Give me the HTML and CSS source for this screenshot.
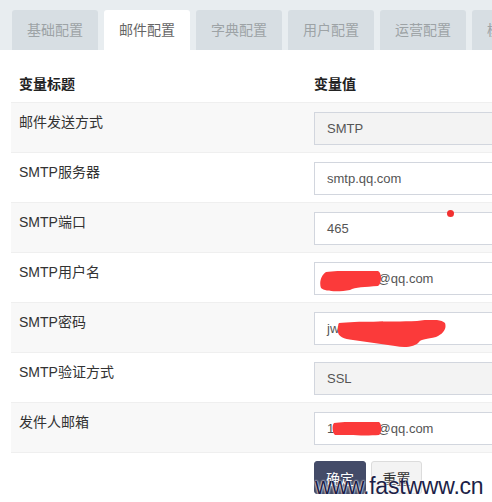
FILE: index.html
```html
<!DOCTYPE html>
<html lang="zh-CN">
<head>
<meta charset="utf-8">
<title>邮件配置</title>
<link rel="stylesheet" href="styles.css">
</head>
<body>
<div class="page">
  <nav class="tabs">
    <div class="tab">基础配置</div>
    <div class="tab active">邮件配置</div>
    <div class="tab">字典配置</div>
    <div class="tab">用户配置</div>
    <div class="tab">运营配置</div>
    <div class="tab">模板配置</div>
  </nav>
  <div class="content">
    <div class="table">
      <div class="row head">
        <div class="label">变量标题</div>
        <div class="value">变量值</div>
      </div>
      <div class="row odd">
        <div class="label">邮件发送方式</div>
        <div class="value"><div class="field disabled">SMTP</div></div>
      </div>
      <div class="row">
        <div class="label">SMTP服务器</div>
        <div class="value"><div class="field">smtp.qq.com</div></div>
      </div>
      <div class="row odd">
        <div class="label">SMTP端口</div>
        <div class="value"><div class="field">465<span class="dot"></span></div></div>
      </div>
      <div class="row">
        <div class="label">SMTP用户名</div>
        <div class="value"><div class="field">1234567@qq.com
          <svg class="redact r1" width="62" height="21" viewBox="0 0 62 21"><path d="M6 1 C20 -1 40 0 58 0 C62 2 62 12 58 15 C45 16 35 16 30 19 C20 21 5 21 1 17 C-1 12 1 4 6 1 Z" fill="#fb3a3a"/></svg>
        </div></div>
      </div>
      <div class="row odd">
        <div class="label">SMTP密码</div>
        <div class="value"><div class="field">jwxxxxxxxxxxxxxx
          <svg class="redact r2" width="110" height="28" viewBox="0 0 110 28"><path d="M2 3 C20 1 50 2 80 1 C92 -1 104 -1 108 3 C110 9 106 14 99 17 C90 19 84 19 82 22 C78 27 68 28 58 26 C44 24 30 22 16 20 C6 19 0 16 1 10 C1 7 1 4 2 3 Z" fill="#fb3a3a"/></svg>
        </div></div>
      </div>
      <div class="row">
        <div class="label">SMTP验证方式</div>
        <div class="value"><div class="field disabled">SSL</div></div>
      </div>
      <div class="row odd">
        <div class="label">发件人邮箱</div>
        <div class="value"><div class="field">1234567@qq.com
          <svg class="redact r3" width="50" height="14" viewBox="0 0 50 14"><path d="M2 1 C15 -1 35 0 47 0 C50 2 50 11 47 13 C35 14 15 13 3 13 C0 11 0 3 2 1 Z" fill="#fb3a3a"/></svg>
        </div></div>
      </div>
      <div class="row actions">
        <div class="label"></div>
        <div class="value">
          <button class="btn primary">确定</button>
          <button class="btn">重置</button>
        </div>
      </div>
    </div>
  </div>
  <div class="watermark">www.fastwww.cn</div>
</div>
</body>
</html>
```
FILE: styles.css
```css
* { box-sizing: border-box; }
html, body { margin: 0; padding: 0; background: #fff; }
body {
  font-family: "Liberation Sans", "Noto Sans CJK SC", sans-serif;
  font-size: 14px;
  color: #333;
  overflow: hidden;
}
.page { position: relative; width: 492px; height: 502px; overflow: hidden; }
.tabs {
  display: flex;
  gap: 6px;
  height: 50px;
  padding: 10px 0 0 12px;
  background: #e8edf0;
  overflow: hidden;
  white-space: nowrap;
}
.tab {
  flex: 0 0 86px;
  height: 40px;
  line-height: 40px;
  text-align: center;
  background: #d7dee3;
  color: #9da3a6;
  border-radius: 3px 3px 0 0;
}
.tab.active { background: #fff; color: #666; }
.content { padding: 16px 0 0 11px; }
.table { width: 640px; }
.row {
  display: grid;
  grid-template-columns: 295px 1fr;
  height: 50px;
  border-top: 1px solid #efefef;
  padding-top: 9px;
}
.row.odd { background: #f8f8f8; }
.row.head {
  height: 36px;
  border-top: none;
  padding-top: 0;
  line-height: 36px;
  font-weight: bold;
  color: #222;
}
.label { padding-left: 8px; padding-top: 0; line-height: 20px; }
.row.head .label { line-height: 36px; }
.value { padding-left: 8px; }
.row.head .value { line-height: 36px; }
.field {
  position: relative;
  height: 33px;
  line-height: 31px;
  border: 1px solid #d2d6de;
  background: #fff;
  padding-left: 12px;
  font-size: 13px;
  color: #555;
}
.field.disabled { background: #f3f3f3; }
.redact { position: absolute; }
.r1 { left: 5px; top: 8px; }
.r2 { left: 22px; top: 7px; }
.r3 { left: 17px; top: 9px; }
.dot {
  position: absolute;
  left: 132px;
  top: -3px;
  width: 7px;
  height: 7px;
  border-radius: 50%;
  background: #f23030;
}
.row.actions { border-top: 1px solid #efefef; padding-top: 8px; }
.btn {
  height: 33px;
  padding: 0 10px;
  font-family: inherit;
  font-size: 14px;
  border-radius: 3px;
  border: 1px solid #dcdcdc;
  background: #f3f3f3;
  color: #333;
  vertical-align: top;
}
.btn.primary { background: #444b68; border-color: #444b68; color: #fff; width: 52px; }
.btn + .btn { margin-left: 1px; width: 51px; }
.watermark {
  position: absolute;
  left: 315px;
  top: 473px;
  font-family: "Liberation Sans", sans-serif;
  font-size: 23px;
  line-height: 26px;
  color: #1d1f48;
  text-shadow: 0 0 2px #fff, 0 0 2px #fff;
  letter-spacing: -0.2px;
}
```
